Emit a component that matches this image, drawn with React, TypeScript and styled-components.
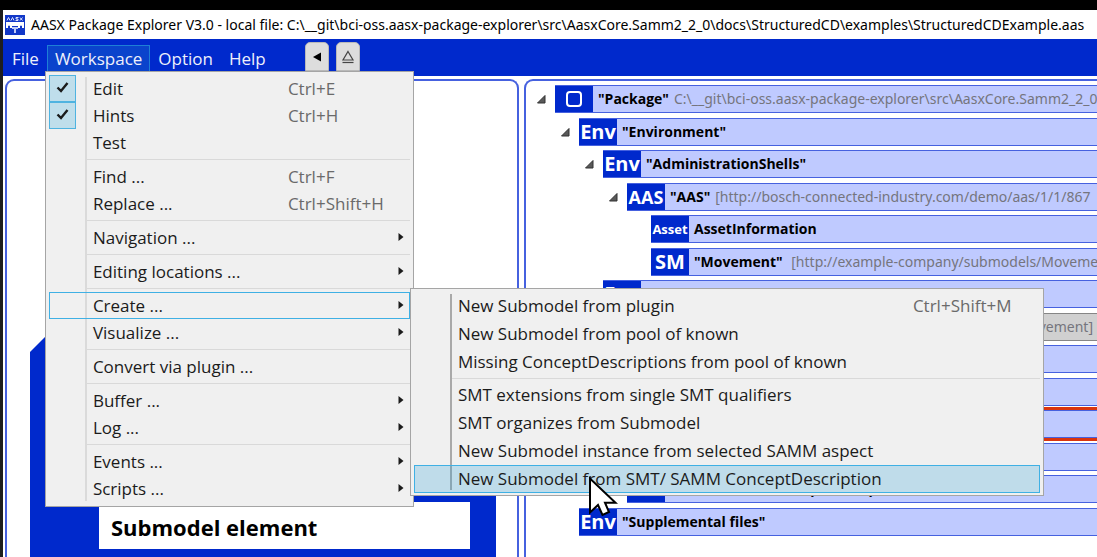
import React from "react";
import styled, { createGlobalStyle, css } from "styled-components";

const BLUE = "#0029cc";
const LINE = "#4661df";
const BAR = "#bfcaff";

const Global = createGlobalStyle`
  *, *::before, *::after { box-sizing: border-box; }
  html, body, #root { height: 100%; }
  body {
    margin: 0;
    background: #fff;
    overflow: hidden;
    font-family: "Noto Sans", "Open Sans", sans-serif;
    color: #1b1b1b;
  }
  ul { list-style: none; margin: 0; padding: 0; }
  button { font: inherit; color: inherit; border: 0; padding: 0; background: none; }
`;

const Desktop = styled.div`
  min-height: 100vh;
  display: flex;
  flex-direction: column;
  background: #1e1e1e;
  border-top: 10px solid #000;
  padding-left: 3px;
`;

const Window = styled.div`
  flex: 1;
  min-width: 0;
  display: flex;
  flex-direction: column;
  background: #fff;
`;

const TitleBar = styled.header`
  height: 29px;
  display: flex;
  align-items: center;
  gap: 6px;
  padding-left: 2px;
  overflow: hidden;
  white-space: nowrap;
`;

const Logo = styled.svg`
  flex: none;
`;

const Title = styled.h1`
  margin: 0;
  font-size: 14px;
  line-height: 20px;
  font-weight: 400;
  color: #000;
`;

const MenuBar = styled.nav`
  height: 37px;
  display: flex;
  align-items: flex-start;
  background: ${BLUE};
`;

const TopList = styled.ul`
  display: flex;
  padding: 6px 0 0 1px;
`;

const TopEntry = styled.li`
  position: relative;
`;

const TopButton = styled.button<{ $open?: boolean }>`
  height: 27px;
  padding: 0 7px;
  border: 1px solid ${(p) => (p.$open ? "#1e7fd6" : "transparent")};
  background: ${(p) => (p.$open ? "#0a43cc" : "transparent")};
  color: #eef0fb;
  font-size: 17px;
  font-family: "Open Sans", sans-serif;
  line-height: 25px;
`;

const ToolButtons = styled.div`
  display: flex;
  gap: 7px;
  padding: 3px 0 0 31px;
`;

const ToolButton = styled.button`
  width: 24px;
  height: 29px;
  display: flex;
  align-items: center;
  justify-content: center;
  background: #ddd;
  border: 1px solid #b9b9b9;
  border-radius: 5px 5px 0 0;
`;

const Menu = styled.ul<{ $level: number }>`
  position: absolute;
  z-index: ${(p) => p.$level};
  top: ${(p) => (p.$level === 1 ? "26px" : "-4px")};
  left: ${(p) => (p.$level === 1 ? "-2px" : "100%")};
  width: ${(p) => (p.$level === 1 ? "369px" : "634px")};
  padding: 3px 3px ${(p) => (p.$level === 1 ? "4px" : "2px")};
  background: #f0f0f0;
  border: 1px solid #a5a5a5;
  color: #1b1b1b;

  &::before {
    content: "";
    position: absolute;
    top: 5px;
    bottom: 5px;
    left: 39px;
    width: 2px;
    background: ${(p) => (p.$level === 1 ? "#dadada" : "#a9a9a9")};
  }
`;

const entry = css`
  position: relative;
  width: 100%;
  display: flex;
  align-items: center;
  padding-left: 43px;
  text-align: left;
  font-family: "Open Sans", sans-serif;
  font-size: 17px;
  line-height: 24px;
  white-space: nowrap;
`;

const Entry = styled.li<{ $tall?: boolean }>`
  position: relative;
  height: ${(p) => (p.$tall ? 28 : 27)}px;
  display: flex;
`;

const EntryButton = styled.button<{ $state?: "open" | "hover" }>`
  ${entry}
  border: 1px solid ${(p) => (p.$state ? "#3fb0e4" : "transparent")};
  background: ${(p) => (p.$state === "hover" ? "rgba(38, 160, 218, 0.24)" : "transparent")};
`;

const EntryLabel = styled.label`
  ${entry}
  border: 1px solid transparent;
`;

const Shortcut = styled.kbd<{ $col: number }>`
  width: ${(p) => p.$col}px;
  margin-left: auto;
  font: inherit;
  color: #6a6a6a;
`;

const Tick = styled.input`
  appearance: none;
  position: absolute;
  inset: -1px auto -1px -1px;
  width: 27px;
  margin: 0;
  border: 1px solid #4fb3e0;
  background: #bfdeeb;
`;

const TickMark = styled.svg`
  position: absolute;
  left: 5px;
  top: 4px;
`;

const Arrow = styled.svg`
  margin: 0 5px 2px auto;
`;

const Divider = styled.li`
  height: 7px;
  margin-left: 38px;
  display: flex;
  align-items: center;

  &::after {
    content: "";
    flex: 1;
    height: 1px;
    background: #d9d9d9;
  }
`;

const SmallDivider = styled(Divider)`
  height: 5px;
`;

const Body = styled.main`
  flex: 1;
  min-height: 0;
  display: grid;
  grid-template-columns: minmax(0, 514fr) minmax(0, 573fr);
  gap: 5px;
  padding: 3px 0 0 2px;
  overflow: hidden;
`;

const Panel = styled.section`
  border: 2px solid ${LINE};
  border-bottom: 0;
  border-radius: 9px 9px 0 0;
  overflow: hidden;
  display: flex;
  flex-direction: column;
`;

const LeftPanel = styled(Panel)`
  padding: 0 21px 0 23px;
`;

const RightPanel = styled(Panel)`
  border-right: 0;
  border-top-right-radius: 0;
`;

const Figure = styled.div`
  flex: 1;
  margin-top: 215px;
  background: ${BLUE};
  clip-path: polygon(0 56px, 56px 0, 100% 0, 100% 100%, 0 100%);
  display: flex;
  flex-direction: column;
  justify-content: flex-end;
  padding: 0 26px 8px 69px;
`;

const FigureLabel = styled.div`
  height: 47px;
  padding: 2px 12px 0;
  background: #fff;
  color: #000;
  font-family: "Open Sans", sans-serif;
  font-size: 22px;
  line-height: 46px;
  font-weight: 700;
  white-space: nowrap;
`;

const Tree = styled.ul`
  padding-top: 4px;
`;

const Node = styled.li<{ $depth: number }>`
  height: 28px;
  margin-bottom: 5px;
  padding-left: ${(p) => 11 + p.$depth * 24}px;
  display: flex;
  align-items: center;

  &:nth-child(even) { margin-bottom: 4px; }
`;

const Expander = styled.button`
  width: 18px;
  height: 18px;
  flex: none;
  display: flex;
  align-items: center;
`;

const Bar = styled.div<{ $tone?: "grey" | "alert" }>`
  flex: 1;
  min-width: 0;
  height: 28px;
  display: flex;
  align-items: center;
  overflow: hidden;
  white-space: nowrap;
  background: ${(p) => (p.$tone === "grey" ? "#d0d0d0" : BAR)};
  border: solid ${(p) => (p.$tone === "grey" ? "#868686" : LINE)};
  border-width: 1px 0;
  box-shadow: ${(p) => (p.$tone === "alert" ? "0 -3px #d9340f, 0 3px #d9340f" : "none")};
  justify-content: ${(p) => (p.$tone === "grey" ? "flex-end" : "flex-start")};
`;

const Badge = styled.span<{ $size: number }>`
  width: 38px;
  height: 28px;
  flex: none;
  display: flex;
  align-items: center;
  justify-content: center;
  background: ${BLUE};
  color: #fff;
  font-family: "Open Sans", sans-serif;
  font-size: ${(p) => p.$size}px;
  line-height: 28px;
  font-weight: 700;
`;

const Name = styled.strong`
  padding-left: 5px;
  font-family: "Open Sans", sans-serif;
  font-size: 14px;
  line-height: 24px;
  font-weight: 700;
  color: #000;
`;

const Info = styled.span`
  padding: 0 4px 0 5px;
  font-size: 14px;
  line-height: 24px;
  color: #75757d;
`;

const Pointer = styled.svg`
  position: fixed;
  left: 588px;
  top: 474px;
  z-index: 9;
  pointer-events: none;
`;

type Row = {
  depth: number;
  badge?: string;
  size?: number;
  open?: boolean;
  name?: string;
  info?: string;
  tone?: "grey" | "alert";
};

const rows: Row[] = [
  { depth: 0, badge: "box", open: true, name: '"Package"', info: "C:\\__git\\bci-oss.aasx-package-explorer\\src\\AasxCore.Samm2_2_0" },
  { depth: 1, badge: "Env", size: 20, open: true, name: '"Environment"' },
  { depth: 2, badge: "Env", size: 20, open: true, name: '"AdministrationShells"' },
  { depth: 3, badge: "AAS", size: 18, open: true, name: '"AAS"', info: "[http://bosch-connected-industry.com/demo/aas/1/1/867" },
  { depth: 4, badge: "Asset", size: 13, name: "AssetInformation" },
  { depth: 4, badge: "SM", size: 20, name: '"Movement"', info: "\u00a0[http://example-company/submodels/Moveme" },
  { depth: 2, badge: "Env", size: 20, name: '"AllSubmodels"' },
  { depth: 3, info: "vement]", tone: "grey" },
  { depth: 4 },
  { depth: 4 },
  { depth: 4, tone: "alert" },
  { depth: 4 },
  { depth: 3, badge: "Env", size: 20, name: "Unstructured ConceptDescriptions" },
  { depth: 1, badge: "Env", size: 20, name: '"Supplemental files"' },
];

type Item = { label: string; keys?: string; tick?: boolean; sub?: boolean; hover?: boolean } | null;

const workspaceItems: Item[] = [
  { label: "Edit", keys: "Ctrl+E", tick: true },
  { label: "Hints", keys: "Ctrl+H", tick: true },
  { label: "Test" },
  null,
  { label: "Find ...", keys: "Ctrl+F" },
  { label: "Replace ...", keys: "Ctrl+Shift+H" },
  null,
  { label: "Navigation ...", sub: true },
  null,
  { label: "Editing locations ...", sub: true },
  null,
  { label: "Create ...", sub: true },
  { label: "Visualize ...", sub: true },
  null,
  { label: "Convert via plugin ..." },
  null,
  { label: "Buffer ...", sub: true },
  { label: "Log ...", sub: true },
  null,
  { label: "Events ...", sub: true },
  { label: "Scripts ...", sub: true },
];

const createItems: Item[] = [
  { label: "New Submodel from plugin", keys: "Ctrl+Shift+M" },
  { label: "New Submodel from pool of known" },
  { label: "Missing ConceptDescriptions from pool of known" },
  null,
  { label: "SMT extensions from single SMT qualifiers" },
  { label: "SMT organizes from Submodel" },
  { label: "New Submodel instance from selected SAMM aspect" },
  { label: "New Submodel from SMT/ SAMM ConceptDescription", hover: true },
];

const SubArrow = () => (
  <Arrow width="6" height="8" viewBox="0 0 6 8" aria-hidden="true">
    <path d="M0.5 0L5.5 4L0.5 8z" fill="#1b1b1b" />
  </Arrow>
);

const CreateMenu = () => (
  <Menu $level={2}>
    {createItems.map((it, i) =>
      it ? (
        <Entry key={i} $tall>
          <EntryButton $state={it.hover ? "hover" : undefined}>
            {it.label}
            {it.keys && <Shortcut $col={126}>{it.keys}</Shortcut>}
          </EntryButton>
        </Entry>
      ) : (
        <SmallDivider key={i} role="separator" />
      )
    )}
  </Menu>
);

const WorkspaceMenu = () => (
  <Menu $level={1}>
    {workspaceItems.map((it, i) => {
      if (!it) return <Divider key={i} role="separator" />;
      if (it.tick)
        return (
          <Entry key={i}>
            <EntryLabel>
              <Tick type="checkbox" defaultChecked />
              <TickMark width="16" height="16" viewBox="0 0 16 16" aria-hidden="true">
                <path d="M2.500 7.500L6 11L12.500 3" fill="none" stroke="#1b1b1b" strokeWidth="2.4" />
              </TickMark>
              {it.label}
              <Shortcut $col={121}>{it.keys}</Shortcut>
            </EntryLabel>
          </Entry>
        );
      const open = it.label === "Create ...";
      return (
        <Entry key={i}>
          <EntryButton $state={open ? "open" : undefined}>
            {it.label}
            {it.keys && <Shortcut $col={121}>{it.keys}</Shortcut>}
            {it.sub && <SubArrow />}
          </EntryButton>
          {open && <CreateMenu />}
        </Entry>
      );
    })}
  </Menu>
);

const AppIcon = () => (
  <Logo width="20" height="20" viewBox="0 0 20 20" aria-hidden="true">
    <rect width="20" height="20" fill="#1238c8" />
    <path d="M2 5.500l1.500-3l1.500 3M6 5.500l1.500-3l1.500 3M13.500 2.500h-2.500v1.500h2v1.500h-2.500M15 2.500l2.500 3M17.500 2.500l-2.500 3" stroke="#dfe5ff" strokeWidth="1" fill="none" />
    <path d="M1 7h18v6h-2v-2q-1-1-2 0v2h-2v-2h-6v2h-2v-2q-1-1-2 0v2H1z" fill="#fff" />
    <path d="M7 12h6v2h-2v4h-2v-4h-2z" fill="#c3cdf5" />
  </Logo>
);

export default function App() {
  return (
    <>
      <Global />
      <Desktop>
        <Window>
          <TitleBar>
            <AppIcon />
            <Title>
              AASX Package Explorer V3.0 - local file: C:\__git\bci-oss.aasx-package-explorer\src\AasxCore.Samm2_2_0\docs\StructuredCD\examples\StructuredCDExample.aas
            </Title>
          </TitleBar>
          <MenuBar>
            <TopList>
              <TopEntry><TopButton>File</TopButton></TopEntry>
              <TopEntry>
                <TopButton $open>Workspace</TopButton>
                <WorkspaceMenu />
              </TopEntry>
              <TopEntry><TopButton>Option</TopButton></TopEntry>
              <TopEntry><TopButton>Help</TopButton></TopEntry>
            </TopList>
            <ToolButtons>
              <ToolButton aria-label="Back">
                <svg width="10" height="10" viewBox="0 0 10 10"><path d="M1 5L9 0.500V9.500z" fill="#000" /></svg>
              </ToolButton>
              <ToolButton aria-label="Home">
                <svg width="14" height="14" viewBox="0 0 14 14" fill="none" stroke="#444" strokeWidth="1.2">
                  <path d="M7 1.500L12 10H2z" /><path d="M1.500 12.500h11" />
                </svg>
              </ToolButton>
            </ToolButtons>
          </MenuBar>
          <Body>
            <LeftPanel>
              <Figure>
                <FigureLabel>Submodel element</FigureLabel>
              </Figure>
            </LeftPanel>
            <RightPanel>
              <Tree>
                {rows.map((r, i) => (
                  <Node key={i} $depth={r.depth}>
                    <Expander aria-label="Toggle">
                      {r.open && (
                        <svg width="9" height="9" viewBox="0 0 9 9"><path d="M8 0.500V8H0.500z" fill="#595959" stroke="#333" strokeWidth="1" /></svg>
                      )}
                    </Expander>
                    <Bar $tone={r.tone}>
                      {r.badge && (
                        <Badge $size={r.size ?? 20}>
                          {r.badge === "box" ? (
                            <svg width="16" height="16" viewBox="0 0 16 16"><rect x="1" y="1" width="14" height="14" rx="3" fill="none" stroke="#fff" strokeWidth="2" /></svg>
                          ) : (
                            r.badge
                          )}
                        </Badge>
                      )}
                      {r.name && <Name>{r.name}</Name>}
                      {r.info && <Info>{r.info}</Info>}
                    </Bar>
                  </Node>
                ))}
              </Tree>
            </RightPanel>
          </Body>
        </Window>
      </Desktop>
      <Pointer width="30" height="44" viewBox="0 0 30 44" aria-hidden="true">
        <path d="M2 4.500V38.500L10 31L14.500 41L21 38L17 28.700H27.500z" fill="#fff" stroke="#000" strokeWidth="2" />
      </Pointer>
    </>
  );
}
